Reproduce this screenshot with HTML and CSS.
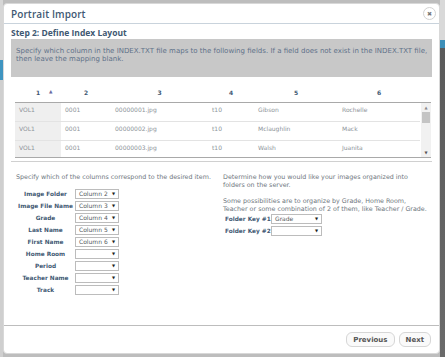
FILE: index.html
```html
<!DOCTYPE html>
<html>
<head>
<meta charset="utf-8">
<link rel="stylesheet" href="styles.css">
</head>
<body>
<div class="dialog">
  <div class="titlebar">
    <span class="title">Portrait Import</span>
    <span class="close">&#x2716;</span>
  </div>
  <div class="content">
    <div class="step">Step 2: Define Index Layout</div>
    <div class="note">Specify which column in the INDEX.TXT file maps to the following fields. If a field does not exist in the INDEX.TXT file,<br>then leave the mapping blank.</div>

    <div class="grid-head">
      <div class="h c1">1 <span class="sort">&#9650;</span></div>
      <div class="h c2">2</div>
      <div class="h c3">3</div>
      <div class="h c4">4</div>
      <div class="h c5">5</div>
      <div class="h c6">6</div>
    </div>
    <div class="grid-body">
      <div class="rows">
        <div class="row"><div class="d c1">VOL1</div><div class="d c2">0001</div><div class="d c3">00000001.jpg</div><div class="d c4">t10</div><div class="d c5">Gibson</div><div class="d c6">Rochelle</div></div>
        <div class="row"><div class="d c1">VOL1</div><div class="d c2">0001</div><div class="d c3">00000002.jpg</div><div class="d c4">t10</div><div class="d c5">Mclaughlin</div><div class="d c6">Mack</div></div>
        <div class="row"><div class="d c1">VOL1</div><div class="d c2">0001</div><div class="d c3">00000003.jpg</div><div class="d c4">t10</div><div class="d c5">Walsh</div><div class="d c6">Juanita</div></div>
      </div>
      <div class="scrollbar">
        <span class="arr up">&#9650;</span>
        <span class="thumb"></span>
        <span class="arr down">&#9660;</span>
      </div>
    </div>

    <div class="mapping">
      <div class="left">
        <p class="txt">Specify which of the columns correspond to the desired item.</p>
        <div class="fields">
          <div class="lbl">Image Folder</div><div class="sel">Column 2<i>&#9660;</i></div>
          <div class="lbl">Image File Name</div><div class="sel">Column 3<i>&#9660;</i></div>
          <div class="lbl">Grade</div><div class="sel">Column 4<i>&#9660;</i></div>
          <div class="lbl">Last Name</div><div class="sel">Column 5<i>&#9660;</i></div>
          <div class="lbl">First Name</div><div class="sel">Column 6<i>&#9660;</i></div>
          <div class="lbl">Home Room</div><div class="sel"><i>&#9660;</i></div>
          <div class="lbl">Period</div><div class="sel"><i>&#9660;</i></div>
          <div class="lbl">Teacher Name</div><div class="sel"><i>&#9660;</i></div>
          <div class="lbl">Track</div><div class="sel"><i>&#9660;</i></div>
        </div>
      </div>
      <div class="right">
        <p class="txt">Determine how you would like your images organized into folders on the server.</p>
        <p class="txt gap">Some possibilities are to organize by Grade, Home Room, Teacher or some combination of 2 of them, like Teacher / Grade.</p>
        <div class="keys">
          <div class="klbl">Folder Key #1</div><div class="sel wide">Grade<i>&#9660;</i></div>
          <div class="klbl">Folder Key #2</div><div class="sel wide"><i>&#9660;</i></div>
        </div>
      </div>
    </div>
  </div>
  <div class="footer">
    <button class="btn">Previous</button>
    <button class="btn">Next</button>
  </div>
</div>
</body>
</html>
```
FILE: styles.css
```css
html, body {
  margin: 0;
  padding: 0;
}
body {
  width: 445px;
  height: 357px;
  overflow: hidden;
  background:
    linear-gradient(to bottom, #d9d9d9 0, #d9d9d9 40px, #3d8fb8 40px, #3d8fb8 48px, #5a5a5a 48px, #6a6a6a 357px) right top / 5px 357px no-repeat,
    linear-gradient(to bottom, #d6d6d6 0, #d6d6d6 60px, #3f94c0 60px, #3f94c0 80px, #cfcfcf 80px) left top / 3px 357px no-repeat,
    #bdbdbd;
  font-family: "DejaVu Sans", sans-serif;
  color: #6f7780;
}
.dialog {
  margin: 3px 0 0 3px;
  width: 437px;
  height: 351px;
  background: #fff;
  border-radius: 4px;
  box-sizing: border-box;
  border: 1px solid #d8d8d8;
  display: flex;
  flex-direction: column;
}
.titlebar {
  height: 19px;
  border-bottom: 1px solid #c9d3dc;
  display: flex;
  align-items: center;
  justify-content: space-between;
  padding: 0 3px 0 7px;
}
.title {
  font-family: "Open Sans", sans-serif;
  font-size: 10px;
  font-weight: 600;
  color: #3e5872;
  letter-spacing: 0.1px;
}
.close {
  width: 11px;
  height: 11px;
  border-radius: 50%;
  border: 1px solid #d2d2d2;
  font-size: 6px;
  color: #777;
  display: flex;
  align-items: center;
  justify-content: center;
}
.content {
  flex: 1;
  padding: 3px 7px 0 7px;
}
.step {
  font-family: "Open Sans", sans-serif;
  font-size: 8.5px;
  font-weight: 700;
  color: #3e5872;
  line-height: 11px;
}
.note {
  margin-top: 1px;
  background: #c8c8c8;
  color: #5f7189;
  font-size: 7px;
  line-height: 8px;
  padding: 8px 5px 14px 5px;
  height: 16px;
  width: 411px;
  white-space: nowrap;
}
.grid-head {
  display: flex;
  margin: 5px 0 0 4px;
  height: 20px;
  align-items: center;
}
.h {
  font-size: 6px;
  font-weight: 700;
  color: #3e5872;
  text-align: center;
  position: relative;
}
.sort {
  position: absolute;
  left: 34px;
  top: 0;
  font-size: 4.5px;
  color: #6a6aa0;
}
.c1 { width: 46px; }
.c2 { width: 50px; }
.c3 { width: 97px; }
.c4 { width: 46px; }
.c5 { width: 84px; }
.c6 { width: 82px; }
.grid-body {
  margin: 0 0 0 4px;
  width: 416px;
  height: 54px;
  overflow: hidden;
  border-top: 1px solid #a9a9a9;
  border-bottom: 1px solid #a9a9a9;
  display: flex;
}
.rows {
  width: 405px;
}
.row {
  display: flex;
  height: 18px;
  border-bottom: 1px solid #e3e3e3;
}
.d {
  font-size: 6px;
  color: #8d9399;
  line-height: 14px;
  padding-left: 4px;
  box-sizing: border-box;
}
.d.c1 {
  background: #efefef;
}
.scrollbar {
  width: 10px;
  margin-left: 1px;
  background: #f1f1f1;
  display: flex;
  flex-direction: column;
  align-items: center;
}
.arr {
  font-size: 4px;
  color: #888;
  height: 9px;
  line-height: 9px;
}
.thumb {
  width: 8px;
  height: 11px;
  background: #c4c4c4;
}
.arr.down {
  margin-top: auto;
  color: #555;
}
.mapping {
  margin-top: 3px;
  border-top: 1px solid #d0d0d0;
  display: flex;
  padding: 0 0 0 5px;
}
.left {
  width: 202px;
}
.right {
  padding-left: 5px;
  width: 207px;
}
.txt {
  margin: 11px 0 0 0;
  font-size: 6.35px;
  line-height: 8px;
  color: #6f7780;
}
.txt.gap {
  margin-top: 8px;
}
.fields {
  margin-top: 7px;
  display: grid;
  grid-template-columns: 59px 44px;
  grid-auto-rows: 12px;
  align-items: center;
}
.lbl {
  font-size: 5.8px;
  font-weight: 700;
  color: #3e5872;
  text-align: center;
  white-space: nowrap;
}
.sel {
  height: 10px;
  box-sizing: border-box;
  border: 1px solid #bcbcbc;
  font-size: 6px;
  line-height: 8px;
  padding-left: 3px;
  color: #55595e;
  position: relative;
  background: #fff;
}
.sel i {
  position: absolute;
  right: 3px;
  top: 0;
  font-style: normal;
  font-size: 4px;
  color: #222;
}
.keys {
  margin-top: 0;
  display: grid;
  grid-template-columns: 48px 51px;
  grid-auto-rows: 12px;
  align-items: center;
}
.klbl {
  font-size: 5.8px;
  font-weight: 700;
  color: #3e5872;
  padding-left: 2px;
  white-space: nowrap;
}
.sel.wide {
  width: 51px;
}
.footer {
  height: 27px;
  border-top: 1px solid #bdbdbd;
  display: flex;
  justify-content: flex-end;
  align-items: center;
  gap: 4px;
  padding-right: 8px;
}
.btn {
  font-family: "DejaVu Sans", sans-serif;
  font-size: 7px;
  font-weight: 700;
  color: #555;
  background: #fafafa;
  border: 1px solid #d6d6d6;
  border-radius: 6px;
  height: 15px;
  padding: 0 6px;
}
```
